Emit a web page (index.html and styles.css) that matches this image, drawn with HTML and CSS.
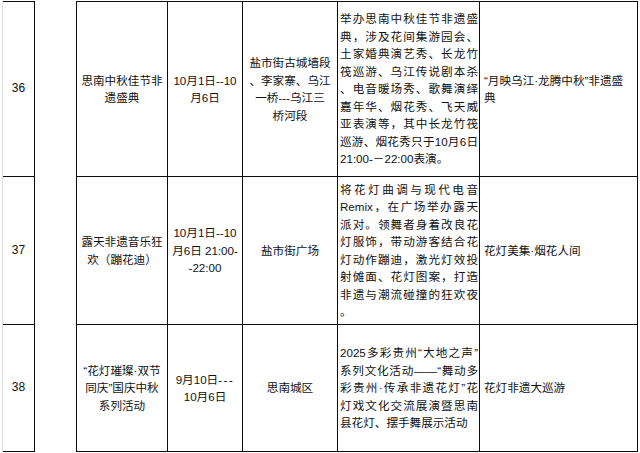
FILE: index.html
```html
<!DOCTYPE html>
<html lang="zh-CN">
<head>
<meta charset="utf-8">
<title>思南中秋国庆活动表</title>
<link rel="stylesheet" href="styles.css">
</head>
<body>
<div class="sheet">
  <div class="cell c num r1">36</div>
  <div class="blank"></div>
  <div class="cell c r1">思南中秋佳节非<br>遗盛典</div>
  <div class="cell c r1">10月1日--10<br>月6日</div>
  <div class="cell c r1">盐市街古城墙段<br>、李家寨、乌江<br>一桥---乌江三<br>桥河段</div>
  <div class="cell desc r1">
    <span class="ln">举办思南中秋佳节非遗盛</span>
    <span class="ln">典，涉及花间集游园会、</span>
    <span class="ln">土家婚典演艺秀、长龙竹</span>
    <span class="ln">筏巡游、乌江传说剧本杀</span>
    <span class="ln">、电音暖场秀、歌舞演绎</span>
    <span class="ln">嘉年华、烟花秀、飞天威</span>
    <span class="ln">亚表演等，其中长龙竹筏</span>
    <span class="ln">巡游、烟花秀只于10月6日</span>
    <span class="ln end">21:00-－22:00表演。</span>
  </div>
  <div class="cell name r1">“月映乌江·龙腾中秋”非遗盛<br>典</div>

  <div class="cell c num">37</div>
  <div class="cell c">露天非遗音乐狂<br>欢（蹦花迪）</div>
  <div class="cell c">10月1日--10<br>月6日 21:00-<br>-22:00</div>
  <div class="cell c">盐市街广场</div>
  <div class="cell desc">
    <span class="ln">将花灯曲调与现代电音</span>
    <span class="ln">Remix，在广场举办露天</span>
    <span class="ln">派对。领舞者身着改良花</span>
    <span class="ln">灯服饰，带动游客结合花</span>
    <span class="ln">灯动作蹦迪，激光灯效投</span>
    <span class="ln">射傩面、花灯图案，打造</span>
    <span class="ln">非遗与潮流碰撞的狂欢夜</span>
    <span class="ln end">。</span>
  </div>
  <div class="cell name">花灯美集·烟花人间</div>

  <div class="cell c num">38</div>
  <div class="cell c">“花灯璀璨·双节<br>同庆”国庆中秋<br>系列活动</div>
  <div class="cell c"><div>9月10日<span class="dash">---</span><br>10月6日</div></div>
  <div class="cell c">思南城区</div>
  <div class="cell desc">
    <span class="ln">2025多彩贵州“大地之声”</span>
    <span class="ln">系列文化活动——“舞动多</span>
    <span class="ln">彩贵州·传承非遗花灯”花</span>
    <span class="ln">灯戏文化交流展演暨思南</span>
    <span class="ln end">县花灯、摆手舞展示活动</span>
  </div>
  <div class="cell name">花灯非遗大巡游</div>
</div>
</body>
</html>
```
FILE: styles.css
```css
html, body {
  margin: 0;
  padding: 0;
  background: #ffffff;
}

body {
  font-family: "Liberation Sans", "Noto Sans CJK SC", sans-serif;
  font-size: 11.6px;
  line-height: 17.5px;
  color: #111111;
}

.sheet {
  display: grid;
  grid-template-columns: 32px 42px 91px 75px 95px 142px 158px;
  grid-template-rows: 176px 148px 127px;
  margin: 1px 0 0 2px;
  border-left: 1px solid #dedede;
  width: max-content;
}

.cell {
  box-sizing: border-box;
  display: flex;
  flex-direction: column;
  justify-content: center;
  border-right: 1px solid #0d0d0d;
  border-bottom: 1px solid #0d0d0d;
}

.cell.r1 {
  border-top: 1px solid #0d0d0d;
}

.blank {
  grid-column: 2;
  grid-row: 1 / 4;
  border-right: 1px solid #0d0d0d;
}

.c {
  align-items: center;
  text-align: center;
}

.num {
  font-size: 12px;
}

.dash {
  letter-spacing: 1.5px;
}

.desc {
  padding: 0 1px 0 2px;
}

.desc .ln {
  display: block;
  text-align: justify;
  text-align-last: justify;
}

.desc .ln.end {
  text-align-last: left;
}

.name {
  padding-left: 4px;
  text-align: left;
}
```
